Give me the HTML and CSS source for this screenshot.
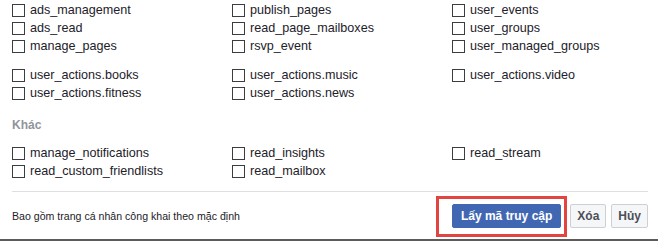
FILE: index.html
```html
<!DOCTYPE html>
<html lang="vi">
<head>
  <meta charset="UTF-8" />
  <title>Quyền truy cập</title>
  <link rel="stylesheet" href="styles.css">
</head>
<body>
  <div class="dialog">
    <div class="perms">
      <div class="perm-group">
        <label class="perm"><input type="checkbox"><span>ads_management</span></label>
        <label class="perm"><input type="checkbox"><span>publish_pages</span></label>
        <label class="perm"><input type="checkbox"><span>user_events</span></label>
        <label class="perm"><input type="checkbox"><span>ads_read</span></label>
        <label class="perm"><input type="checkbox"><span>read_page_mailboxes</span></label>
        <label class="perm"><input type="checkbox"><span>user_groups</span></label>
        <label class="perm"><input type="checkbox"><span>manage_pages</span></label>
        <label class="perm"><input type="checkbox"><span>rsvp_event</span></label>
        <label class="perm"><input type="checkbox"><span>user_managed_groups</span></label>
      </div>

      <div class="perm-group">
        <label class="perm"><input type="checkbox"><span>user_actions.books</span></label>
        <label class="perm"><input type="checkbox"><span>user_actions.music</span></label>
        <label class="perm"><input type="checkbox"><span>user_actions.video</span></label>
        <label class="perm"><input type="checkbox"><span>user_actions.fitness</span></label>
        <label class="perm"><input type="checkbox"><span>user_actions.news</span></label>
      </div>

      <div class="group-title">Khác</div>
      <div class="perm-group">
        <label class="perm"><input type="checkbox"><span>manage_notifications</span></label>
        <label class="perm"><input type="checkbox"><span>read_insights</span></label>
        <label class="perm"><input type="checkbox"><span>read_stream</span></label>
        <label class="perm"><input type="checkbox"><span>read_custom_friendlists</span></label>
        <label class="perm"><input type="checkbox"><span>read_mailbox</span></label>
      </div>
    </div>

    <div class="footer">
      <div class="note">Bao gồm trang cá nhân công khai theo mặc định</div>
      <div class="actions">
        <span class="highlight"><button class="btn btn-primary">Lấy mã truy cập</button></span>
        <button class="btn">Xóa</button>
        <button class="btn">Hủy</button>
      </div>
    </div>
  </div>
  <div class="edge"></div>
</body>
</html>
```

FILE: styles.css
```css
body {
  margin: 0;
  background: #fff;
  font-family: "Liberation Sans", Arial, sans-serif;
  color: #1d2129;
}

.dialog {
  padding: 1px 10px 0 12px;
}

.perm-group {
  display: grid;
  grid-template-columns: repeat(3, 220px);
  grid-auto-rows: 18px;
  margin-bottom: 11px;
}

.perm {
  display: flex;
  align-items: center;
  gap: 5px;
  font-size: 12.6px;
  white-space: nowrap;
}

.perm input {
  appearance: none;
  -webkit-appearance: none;
  margin: 0;
  width: 13px;
  height: 13px;
  border: 1px solid #3a3d42;
  border-radius: 0;
  background: #fff;
  flex-shrink: 0;
}

.group-title {
  margin: 15px 0 11px;
  font-size: 12px;
  line-height: 16px;
  font-weight: bold;
  color: #90949c;
}

.footer {
  display: flex;
  align-items: center;
  justify-content: space-between;
  border-top: 1px solid #dddfe2;
  padding: 12px 0 11px;
}

.note {
  font-size: 10.6px;
  color: #1d2129;
}

.actions {
  display: flex;
  align-items: center;
  gap: 5px;
}

.btn {
  height: 24px;
  padding: 0 6px;
  font-family: "Liberation Sans", Arial, sans-serif;
  font-size: 12px;
  font-weight: bold;
  color: #4b4f56;
  background: #f5f6f7;
  border: 1px solid #ccd0d5;
  border-radius: 2px;
}

.btn-primary {
  padding: 0 8px;
  color: #fff;
  background: #4267b2;
  border-color: #4267b2;
}

.highlight {
  position: relative;
  display: flex;
  margin-right: 4px;
}

.highlight::after {
  content: "";
  position: absolute;
  left: -16px;
  right: -6px;
  top: -8px;
  bottom: -9px;
  border: 3px solid #e2443f;
  pointer-events: none;
}

.edge {
  height: 2px;
  background: #5b5b5b;
}
```
